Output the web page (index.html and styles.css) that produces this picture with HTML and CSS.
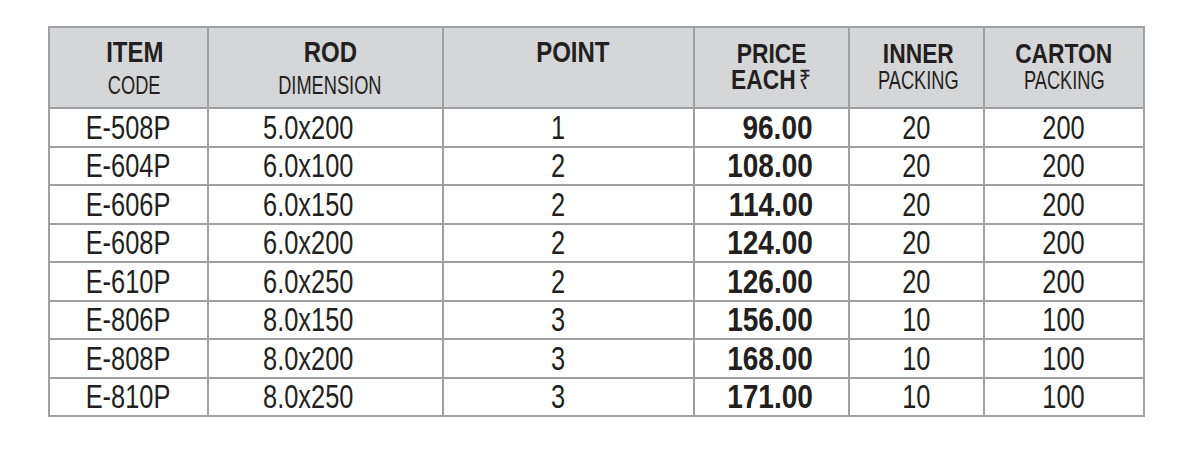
FILE: index.html
```html
<!DOCTYPE html>
<html>
<head>
<meta charset="utf-8">
<link rel="stylesheet" href="styles.css">
</head>
<body>
<table class="price-table">
  <colgroup>
    <col class="c-item"><col class="c-rod"><col class="c-point"><col class="c-price"><col class="c-inner"><col class="c-carton">
  </colgroup>
  <thead>
    <tr>
      <th class="h-item"><div class="h-main"><span class="nb">ITEM</span></div><div class="h-sub"><span class="ns">CODE</span></div></th>
      <th class="h-rod"><div class="h-main"><span class="nb">ROD</span></div><div class="h-sub"><span class="ns">DIMENSION</span></div></th>
      <th class="h-point"><div class="h-main"><span class="nb">POINT</span></div></th>
      <th class="h-price"><div class="h-main2"><span class="nb">PRICE</span></div><div class="h-main2"><span class="nb">EACH<span class="rupee">₹</span></span></div></th>
      <th class="h-inner"><div class="h-main2"><span class="nb">INNER</span></div><div class="h-sub2"><span class="ns">PACKING</span></div></th>
      <th class="h-carton"><div class="h-main2"><span class="nb">CARTON</span></div><div class="h-sub2"><span class="ns">PACKING</span></div></th>
    </tr>
  </thead>
  <tbody>
    <tr><td><span class="nr">E-508P</span></td><td class="d-rod"><span class="nr">5.0x200</span></td><td class="d-point"><span class="nr">1</span></td><td class="d-price"><span class="np">96.00</span></td><td><span class="nr">20</span></td><td><span class="nr">200</span></td></tr>
    <tr><td><span class="nr">E-604P</span></td><td class="d-rod"><span class="nr">6.0x100</span></td><td class="d-point"><span class="nr">2</span></td><td class="d-price"><span class="np">108.00</span></td><td><span class="nr">20</span></td><td><span class="nr">200</span></td></tr>
    <tr><td><span class="nr">E-606P</span></td><td class="d-rod"><span class="nr">6.0x150</span></td><td class="d-point"><span class="nr">2</span></td><td class="d-price"><span class="np">114.00</span></td><td><span class="nr">20</span></td><td><span class="nr">200</span></td></tr>
    <tr><td><span class="nr">E-608P</span></td><td class="d-rod"><span class="nr">6.0x200</span></td><td class="d-point"><span class="nr">2</span></td><td class="d-price"><span class="np">124.00</span></td><td><span class="nr">20</span></td><td><span class="nr">200</span></td></tr>
    <tr><td><span class="nr">E-610P</span></td><td class="d-rod"><span class="nr">6.0x250</span></td><td class="d-point"><span class="nr">2</span></td><td class="d-price"><span class="np">126.00</span></td><td><span class="nr">20</span></td><td><span class="nr">200</span></td></tr>
    <tr><td><span class="nr">E-806P</span></td><td class="d-rod"><span class="nr">8.0x150</span></td><td class="d-point"><span class="nr">3</span></td><td class="d-price"><span class="np">156.00</span></td><td><span class="nr">10</span></td><td><span class="nr">100</span></td></tr>
    <tr><td><span class="nr">E-808P</span></td><td class="d-rod"><span class="nr">8.0x200</span></td><td class="d-point"><span class="nr">3</span></td><td class="d-price"><span class="np">168.00</span></td><td><span class="nr">10</span></td><td><span class="nr">100</span></td></tr>
    <tr><td><span class="nr">E-810P</span></td><td class="d-rod"><span class="nr">8.0x250</span></td><td class="d-point"><span class="nr">3</span></td><td class="d-price"><span class="np">171.00</span></td><td><span class="nr">10</span></td><td><span class="nr">100</span></td></tr>
  </tbody>
</table>
</body>
</html>
```
FILE: styles.css
```css
html, body {
  margin: 0;
  padding: 0;
  background: #ffffff;
}
body {
  padding: 26px 0 0 48px;
  font-family: "Liberation Sans", Arial, sans-serif;
  color: #231f20;
}
.price-table {
  border-collapse: collapse;
  table-layout: fixed;
  width: 1097px;
}
.c-item { width: 159px; }
.c-rod { width: 235px; }
.c-point { width: 251px; }
.c-price { width: 155px; }
.c-inner { width: 135px; }
.c-carton { width: 160px; }

.price-table th,
.price-table td {
  border: 2px solid #a0a0a0;
  padding: 0;
}
.price-table thead tr { height: 81px; }
.price-table th {
  background: #d5d6d8;
  vertical-align: top;
  text-align: center;
  font-weight: normal;
  white-space: nowrap;
}
.price-table .h-item,
.price-table .h-rod,
.price-table .h-point { padding-top: 8px; }
.price-table .h-price,
.price-table .h-inner,
.price-table .h-carton { padding-top: 13px; }
.price-table .h-item { padding-left: 12px; }
.price-table .h-rod { padding-left: 9px; }
.price-table .h-point { padding-left: 8px; }
.price-table .h-inner { padding-left: 3px; }
.h-main {
  font-size: 30px;
  font-weight: bold;
  line-height: 32px;
}
.h-sub {
  font-size: 25px;
  line-height: 26px;
  margin-top: 4px;
}
.h-main2 {
  font-size: 28.5px;
  font-weight: bold;
  line-height: 25px;
}
.h-sub2 {
  font-size: 25px;
  line-height: 26px;
  margin-top: 1px;
}
.nb, .ns, .nr, .np {
  display: inline-block;
  white-space: nowrap;
}
.nb { transform: scaleX(0.8); }
.ns { transform: scaleX(0.73); }
.nr { transform: scaleX(0.77); }
.np { transform: scaleX(0.85); transform-origin: right center; }
.d-rod .nr { transform-origin: left center; }
.rupee {
  font-family: "Noto Sans", "DejaVu Sans", sans-serif;
  font-weight: normal;
  font-size: 27px;
  margin-left: 4px;
}
.price-table tbody tr { height: 38.5px; }
.price-table td {
  font-size: 33px;
  line-height: 34px;
  padding-top: 1px;
  vertical-align: middle;
  text-align: center;
  white-space: nowrap;
}
.price-table .d-rod { text-align: left; padding-left: 54px; }
.price-table .d-point { padding-right: 20px; }
.price-table .d-price { text-align: right; padding-right: 35px; font-weight: bold; }
```
